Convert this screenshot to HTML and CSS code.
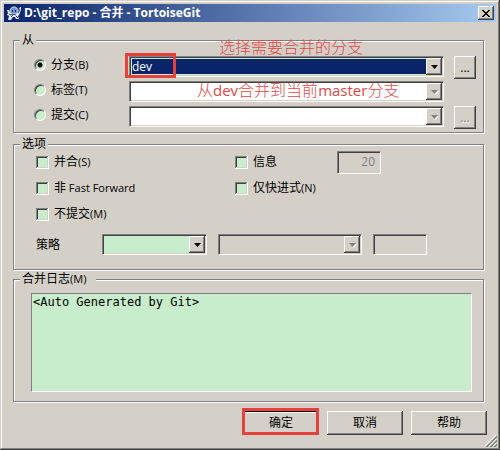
FILE: index.html
```html
<!DOCTYPE html>
<html lang="zh-CN">
<head>
<meta charset="utf-8">
<title>D:\git_repo - 合并 - TortoiseGit</title>
<link rel="stylesheet" href="styles.css">
</head>
<body>
<main class="dialog">
  <header class="titlebar">
    <svg class="app-icon" viewBox="0 0 16 16" aria-hidden="true">
      <path d="M1 5h2l1 3h8l1-4 1-2h1v3l-2 5-1 1 1 3h-3l-1-2H7l-2 3H2l1-4-2-1 1-2z" fill="#dfe7f3"/>
      <path d="M4 7c0-4 2-5 4-5s4 1 4 5l-1 2H5z" fill="#6f93d2" stroke="#dfe7f3"/>
      <path d="M6 5h1v2H6zM9 5h1v2H9z" fill="#10245f"/>
      <path d="M5 10l2-1 3 1M3 9l2 1M12 8l2-4M5 12l2-2M10 11l2 2" fill="none" stroke="#31445f"/>
    </svg>
    <h1 class="title">D:\git_repo - 合并 - TortoiseGit</h1>
    <button class="close" type="button" aria-label="关闭">
      <svg viewBox="0 0 8 7" aria-hidden="true"><path d="M0 0h2v1h1v1h2V1h1V0h2v1H7v1H6v1H5v1h1v1h1v1h1v1H6V6H5V5H3v1H2v1H0V6h1V5h1V4h1V3H2V2H1V1H0z"/></svg>
    </button>
  </header>

  <form class="content">
    <fieldset class="group">
      <legend>从</legend>
      <div class="sources">
        <label class="choice"><input class="radio" type="radio" name="source" checked><span>分支<span class="latin">(B)</span></span></label>
        <div class="combo active">
          <select aria-label="分支"><option>dev</option></select>
          <span class="drop"><svg viewBox="0 0 7 4"><path d="M0 0h7L3.500 4z"/></svg></span>
          <span class="mark mark-field"></span>
          <span class="note note-top">选择需要合并的分支</span>
        </div>
        <button class="button browse" type="button">...</button>

        <label class="choice"><input class="radio" type="radio" name="source"><span>标签<span class="latin">(T)</span></span></label>
        <div class="combo">
          <select aria-label="标签" disabled></select>
          <span class="drop off"><svg viewBox="0 0 7 4"><path d="M0 0h7L3.500 4z"/></svg></span>
          <span class="note note-inside">从<span class="note-latin">dev</span>合并到当前<span class="note-latin">master</span>分支</span>
        </div>
        <span></span>

        <label class="choice"><input class="radio" type="radio" name="source"><span>提交<span class="latin">(C)</span></span></label>
        <div class="combo">
          <select aria-label="提交" disabled></select>
          <span class="drop off"><svg viewBox="0 0 7 4"><path d="M0 0h7L3.500 4z"/></svg></span>
        </div>
        <button class="button browse" type="button" disabled>...</button>
      </div>
    </fieldset>

    <fieldset class="group">
      <legend>选项</legend>
      <div class="options">
        <label class="choice"><input class="check" type="checkbox"><span>并合<span class="latin">(S)</span></span></label>
        <label class="choice"><input class="check" type="checkbox"><span>信息</span></label>
        <input class="field count" type="text" value="20" aria-label="信息数量" disabled>
        <label class="choice"><input class="check" type="checkbox"><span>非<span class="latin"> Fast Forward</span></span></label>
        <label class="choice"><input class="check" type="checkbox"><span>仅快进式<span class="latin">(N)</span></span></label>
        <span></span>
        <label class="choice"><input class="check" type="checkbox"><span>不提交<span class="latin">(M)</span></span></label>
      </div>
      <div class="strategy">
        <label for="strategy">策略</label>
        <div class="combo green">
          <select id="strategy"></select>
          <span class="drop"><svg viewBox="0 0 7 4"><path d="M0 0h7L3.500 4z"/></svg></span>
        </div>
        <div class="combo gray">
          <select aria-label="策略选项" disabled></select>
          <span class="drop off"><svg viewBox="0 0 7 4"><path d="M0 0h7L3.500 4z"/></svg></span>
        </div>
        <input class="field" type="text" aria-label="策略参数" disabled>
      </div>
    </fieldset>

    <fieldset class="group log">
      <legend class="wide">合并日志<span class="latin">(M)</span></legend>
      <textarea aria-label="合并日志">&lt;Auto Generated by Git&gt;</textarea>
    </fieldset>

    <footer class="actions">
      <button class="button default" type="submit">确定<span class="mark mark-button"></span></button>
      <button class="button" type="button">取消</button>
      <button class="button" type="button">帮助</button>
    </footer>
  </form>
  <svg class="grip" viewBox="0 0 12 12" aria-hidden="true">
    <path d="M0 11L11 0M4 11l7-7M8 11l3-3" stroke="#fff"/>
    <path d="M1 12L12 1M2 12L12 2M5 12l7-7M6 12l6-6M9 12l3-3M10 12l2-2" stroke="#808080"/>
  </svg>
</main>
</body>
</html>
```

FILE: styles.css
```css
* {
  box-sizing: border-box;
}

body {
  margin: 0;
  background: #d4d0c8;
  color: #000;
  font: 12px/14px "Open Sans", "Noto Sans CJK SC", sans-serif;
}

input, select, textarea, button {
  margin: 0;
  padding: 0;
  border: 0;
  border-radius: 0;
  outline: 0;
  font: inherit;
  color: inherit;
}

.dialog {
  position: relative;
  display: flex;
  flex-direction: column;
  min-height: 100vh;
  padding: 4px;
  background: #d4d0c8;
  box-shadow: inset -1px -1px #404040, inset 1px 1px #d4d0c8,
    inset -2px -2px #808080, inset 2px 2px #fff;
}

.latin {
  font-size: 11px;
  white-space: pre;
}

/* Title bar */
.titlebar {
  display: flex;
  align-items: center;
  gap: 2px;
  height: 18px;
  padding: 0 2px;
  background: linear-gradient(90deg, #0a246a, #a6caf0);
}

.app-icon {
  width: 16px;
  height: 16px;
}

.title {
  flex: 1;
  margin: 0;
  color: #fff;
  font-size: 12px;
  line-height: 18px;
}

.close {
  display: grid;
  place-items: center;
  width: 16px;
  height: 14px;
  background: #d4d0c8;
  box-shadow: inset -1px -1px #404040, inset 1px 1px #fff, inset -2px -2px #808080;
}

.close svg {
  width: 8px;
  height: 7px;
}

/* Groups */
.content {
  display: flex;
  flex: 1;
  flex-direction: column;
  gap: 4px;
  padding: 11px 9px 11px;
}

.group {
  min-width: 0;
  margin: 0 3px 0 0;
  padding: 0 6px;
  border: 1px solid #808080;
  box-shadow: 1px 1px #fff, inset 1px 1px #fff;
}

.group legend {
  padding: 0 2px;
  background: #d4d0c8;
}

.group .wide {
  padding-right: 10px;
}

.sources {
  display: grid;
  grid-template-columns: 85px 1fr 22px;
  grid-auto-rows: 21px;
  gap: 4px 10px;
  padding: 9px 1px 5px 14px;
}

.options {
  display: grid;
  grid-template-columns: 193px 96px 44px;
  grid-auto-rows: 22px;
  gap: 4px 6px;
  padding-left: 16px;
}

.strategy {
  display: grid;
  grid-template-columns: 55px 105px 144px 54px;
  gap: 11px;
  align-items: center;
  padding: 9px 0 14px 16px;
}

.choice {
  display: flex;
  align-items: center;
  gap: 5px;
  white-space: nowrap;
}

.sources .choice {
  height: 17px;
}

.check, .radio {
  flex: none;
  width: 13px;
  height: 13px;
  appearance: none;
  background: #c7edcc;
}

.check {
  box-shadow: inset -1px -1px #fff, inset 1px 1px #808080,
    inset -2px -2px #d4d0c8, inset 2px 2px #404040;
}

.radio {
  width: 12px;
  height: 12px;
  border: 1px solid;
  border-color: #808080 #fff #fff #808080;
  border-radius: 50%;
  box-shadow: inset 1px 1px #404040;
}

.radio:checked {
  background: radial-gradient(circle, #000 2px, #c7edcc 3px);
}

/* Fields */
.combo {
  position: relative;
  height: 21px;
}

.combo select, .field {
  display: block;
  width: 100%;
  height: 21px;
  padding: 0 2px;
  border: 1px solid;
  border-color: #808080 #fff #fff #808080;
  appearance: none;
  background: #fff;
  box-shadow: inset 1px 1px #404040, inset -1px -1px #d4d0c8;
  opacity: 1;
}

.active select {
  background: #0a246a;
  box-shadow: inset 1px 1px #404040, inset -1px -1px #d4d0c8,
    inset 0 0 0 2px #c7edcc;
  color: #fff;
}

.combo.green select {
  background: #c7edcc;
}

.combo.gray select, .field {
  background: #d4d0c8;
}

.field.count {
  height: 23px;
  padding: 0 5px 2px;
  color: #808080;
  text-align: right;
}

.drop {
  position: absolute;
  top: 2px;
  right: 2px;
  bottom: 2px;
  display: grid;
  place-items: center;
  width: 16px;
  background: #d4d0c8;
  box-shadow: inset -1px -1px #404040, inset 1px 1px #fff, inset -2px -2px #808080;
  pointer-events: none;
}

.active .drop {
  outline: 0;
  border-left: 0;
}

.drop svg {
  width: 7px;
  height: 4px;
}

.off svg {
  fill: #808080;
  filter: drop-shadow(1px 1px #fff);
}

.log {
  flex: 1;
  margin-top: -2px;
  padding: 7px 11px 9px 17px;
}

.log legend {
  margin-left: -11px;
}

.log textarea {
  display: block;
  width: 100%;
  height: 99px;
  padding: 1px;
  border: 1px solid;
  border-color: #808080 #fff #fff #808080;
  background: #c7edcc;
  font: 12px/14px "DejaVu Sans Mono", monospace;
  resize: none;
}

/* Buttons */
.button {
  position: relative;
  width: 76px;
  height: 24px;
  background: #d4d0c8;
  box-shadow: inset -1px -1px #404040, inset 1px 1px #fff, inset -2px -2px #808080;
}

.button:disabled {
  color: #808080;
  text-shadow: 1px 1px #fff;
}

.browse {
  width: 22px;
  height: 23px;
}

.default {
  box-shadow: inset 0 0 0 1px #000, inset -2px -2px #808080, inset 2px 2px #fff;
}

.actions {
  display: flex;
  justify-content: flex-end;
  gap: 8px;
  margin-top: 5px;
}

/* Annotations */
.mark {
  position: absolute;
  border: 3px solid #e83f3f;
  pointer-events: none;
}

.mark-field {
  top: -3px;
  left: -4px;
  width: 51px;
  height: 25px;
}

.mark-button {
  inset: -3px 0 0 -1px;
}

.note {
  position: absolute;
  z-index: 1;
  color: #e04848;
  font-size: 16px;
  font-weight: 300;
  line-height: 18px;
  white-space: nowrap;
  pointer-events: none;
}

.note-latin {
  font-size: 15px;
  font-weight: 400;
}

.note-top {
  top: -18px;
  left: 90px;
}

.note-inside {
  top: 0;
  left: 68px;
}

/* Resize grip */
.grip {
  position: absolute;
  right: 3px;
  bottom: 3px;
  width: 12px;
  height: 12px;
}
```
